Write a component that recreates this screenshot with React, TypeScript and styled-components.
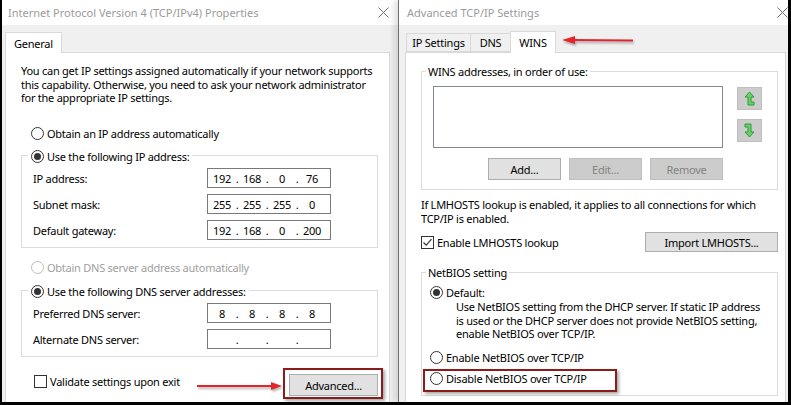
import React from 'react';
import styled, { createGlobalStyle } from 'styled-components';

const ui = {
  font: "'Noto Sans', 'Segoe UI', sans-serif",
  size: '11px',
  tracking: '-0.25px',
  panelBorder: '#d9d9d9',
  groupBorder: '#dcdcdc',
  mark: '#8b1c1c',
  arrow: '#e3242b',
};

const GlobalStyle = createGlobalStyle`
  * { box-sizing: border-box; }
  html, body { margin: 0; padding: 0; background: #000; }
  body {
    font-family: ${ui.font};
    font-size: ${ui.size};
    letter-spacing: ${ui.tracking};
    color: #000;
  }
`;

const Screen = styled.div`
  width: 791px;
  height: 405px;
  display: flex;
  background: #000;
  border-left: 2px solid #000;
  border-right: 3px solid #000;
  border-bottom: 3px solid #000;
  overflow: hidden;
`;

const Window = styled.section<{ $w: number; $divider?: boolean }>`
  width: ${(p) => p.$w}px;
  flex-shrink: 0;
  display: flex;
  flex-direction: column;
  background: #f0f0f0;
  border-left: ${(p) => (p.$divider ? '1px solid #707070' : 'none')};
  box-shadow: ${(p) => (p.$divider ? '-4px 0 6px rgba(0,0,0,0.12)' : 'none')};
  overflow: hidden;
`;

const TitleBar = styled.header<{ $pl: number; $pr: number }>`
  height: 25px;
  flex-shrink: 0;
  display: flex;
  align-items: center;
  padding: 0 ${(p) => p.$pr}px 0 ${(p) => p.$pl}px;
  background: #fff;
  color: #9b9b9b;
  letter-spacing: 0;
  white-space: nowrap;
`;

const TitleText = styled.span`
  flex: 1;
`;

const TabStrip = styled.nav<{ $pl: number }>`
  height: 27px;
  flex-shrink: 0;
  display: flex;
  align-items: flex-end;
  padding-left: ${(p) => p.$pl}px;
  position: relative;
  z-index: 1;
`;

const Tab = styled.div<{ $active?: boolean; $h: number; $w?: number }>`
  height: ${(p) => p.$h}px;
  ${(p) => (p.$w ? `width: ${p.$w}px;` : 'padding: 0 8px;')}
  display: flex;
  align-items: center;
  justify-content: center;
  background: ${(p) => (p.$active ? '#fff' : '#f0f0f0')};
  border: 1px solid ${ui.panelBorder};
  border-bottom: ${(p) => (p.$active ? 'none' : `1px solid ${ui.panelBorder}`)};
  margin-bottom: ${(p) => (p.$active ? -1 : 0)}px;
  white-space: nowrap;
  & + & {
    margin-left: -1px;
  }
`;

const Panel = styled.div<{ $ml: number; $mr: number; $pl: number; $pr: number }>`
  flex: 1;
  display: flex;
  flex-direction: column;
  margin: 0 ${(p) => p.$mr}px 0 ${(p) => p.$ml}px;
  padding: 0 ${(p) => p.$pr}px 0 ${(p) => p.$pl}px;
  background: #fff;
  border: 1px solid ${ui.panelBorder};
  border-bottom: none;
`;

const Text = styled.p<{ $mt: number; $ml?: number }>`
  margin: ${(p) => p.$mt}px 0 0 ${(p) => p.$ml ?? 0}px;
  line-height: 13.5px;
  white-space: nowrap;
`;

const Option = styled.div<{ $mt?: number; $ml?: number; $off?: boolean }>`
  height: 15px;
  display: flex;
  align-items: center;
  gap: 3px;
  margin: ${(p) => p.$mt ?? 0}px 0 0 ${(p) => p.$ml ?? 0}px;
  color: ${(p) => (p.$off ? '#a0a0a0' : '#000')};
  white-space: nowrap;
`;

const Radio = styled.span<{ $on?: boolean; $off?: boolean }>`
  width: 13px;
  height: 13px;
  flex-shrink: 0;
  border-radius: 50%;
  border: 1px solid ${(p) => (p.$off ? '#bcbcbc' : '#333')};
  background: #fff;
  display: flex;
  align-items: center;
  justify-content: center;
  &::after {
    content: '';
    display: ${(p) => (p.$on ? 'block' : 'none')};
    width: 7px;
    height: 7px;
    border-radius: 50%;
    background: #333;
  }
`;

const Box = styled.span`
  width: 13px;
  height: 13px;
  flex-shrink: 0;
  border: 1px solid #333;
  background: #fff;
  display: flex;
  align-items: center;
  justify-content: center;
`;

const Group = styled.fieldset<{ $mt: number; $pb: number }>`
  margin: ${(p) => p.$mt}px 0 0 0;
  padding: 0 0 ${(p) => p.$pb}px 0;
  min-width: 0;
  border: 1px solid ${ui.groupBorder};
`;

const GroupBody = styled.div<{ $pl: number }>`
  display: flex;
  flex-direction: column;
  padding-left: ${(p) => p.$pl}px;
`;

const Legend = styled.legend<{ $ml: number; $px: number }>`
  margin-left: ${(p) => p.$ml}px;
  padding: 0 ${(p) => p.$px}px;
  height: 15px;
  line-height: 15px;
  white-space: nowrap;
`;

const LegendOption = styled.span`
  display: inline-flex;
  align-items: center;
  gap: 3px;
  height: 15px;
`;

const FieldGrid = styled.div`
  display: grid;
  grid-template-columns: 174px 124px;
  grid-auto-rows: 20px;
  row-gap: 6px;
  align-items: center;
  padding: 5.5px 0 0 11px;
`;

const IpField = styled.div`
  width: 124px;
  height: 20px;
  border: 1px solid #7a7a7a;
  display: flex;
  align-items: center;
  padding-left: 3px;
`;

const Octet = styled.span`
  width: 22px;
  text-align: center;
`;

const Dot = styled.span`
  width: 8px;
  text-align: center;
`;

const Button = styled.button<{ $w: number; $h: number; $disabled?: boolean }>`
  width: ${(p) => p.$w}px;
  height: ${(p) => p.$h}px;
  flex-shrink: 0;
  padding: 0;
  display: flex;
  align-items: center;
  justify-content: center;
  font: inherit;
  letter-spacing: inherit;
  background: ${(p) => (p.$disabled ? '#cccccc' : '#e1e1e1')};
  border: 1px solid ${(p) => (p.$disabled ? '#bfbfbf' : '#adadad')};
  color: ${(p) => (p.$disabled ? '#838383' : '#000')};
`;

const Highlight = styled.div<{ $w?: number; $pad: string; $mt?: number; $ml?: number; $mr?: number }>`
  ${(p) => (p.$w ? `width: ${p.$w}px;` : '')}
  padding: ${(p) => p.$pad};
  margin: ${(p) => p.$mt ?? 0}px ${(p) => p.$mr ?? 0}px 0 ${(p) => p.$ml ?? 0}px;
  border: 2px solid ${ui.mark};
  box-shadow: 2px 2px 3px rgba(0, 0, 0, 0.35);
  flex-shrink: 0;
`;

const FooterRow = styled.div`
  margin-top: 11px;
  display: flex;
  align-items: flex-start;
`;

const CheckRow = styled.label<{ $mt?: number; $ml?: number }>`
  display: flex;
  align-items: center;
  gap: 3px;
  height: 15px;
  margin: ${(p) => p.$mt ?? 0}px 0 0 ${(p) => p.$ml ?? 0}px;
  white-space: nowrap;
`;

const Pointer = styled.svg<{ $mt: number; $ml?: string }>`
  flex-shrink: 0;
  align-self: flex-start;
  margin-top: ${(p) => p.$mt}px;
  margin-left: ${(p) => p.$ml ?? '0'};
  filter: drop-shadow(1px 2px 1px rgba(0, 0, 0, 0.3));
`;

const ListRow = styled.div`
  display: flex;
  margin-top: 7px;
`;

const ListColumn = styled.div`
  width: 290px;
  display: flex;
  flex-direction: column;
`;

const ListBox = styled.div`
  height: 62px;
  border: 1px solid #828790;
  background: #fff;
`;

const ButtonRow = styled.div`
  margin-top: 10px;
  display: flex;
  justify-content: flex-end;
  gap: 8px;
`;

const OrderColumn = styled.div`
  margin-left: 14px;
  padding-top: 1px;
  display: flex;
  flex-direction: column;
  gap: 9px;
`;

const OrderButton = styled.div`
  width: 25px;
  height: 23px;
  background: #cccccc;
  border: 1px solid #bfbfbf;
  display: flex;
  align-items: center;
  justify-content: center;
`;

const LmRow = styled.div`
  margin-top: 7px;
  height: 20px;
  display: flex;
  align-items: center;
  justify-content: space-between;
`;

const CloseGlyph = () => (
  <svg width="11" height="11" viewBox="0 0 11 11">
    <path d="M0.5 0.5 L10.5 10.5 M10.5 0.5 L0.5 10.5" stroke="#6f6f6f" strokeWidth="1" fill="none" />
  </svg>
);

const CheckGlyph = () => (
  <svg width="11" height="11" viewBox="0 0 11 11">
    <path d="M1.5 5.5 L4.2 8.2 L9.5 2.2" stroke="#333" strokeWidth="1.2" fill="none" />
  </svg>
);

const OrderGlyph = ({ down }: { down?: boolean }) => (
  <svg width="13" height="15" viewBox="0 0 13 15">
    <path
      d={
        down
          ? 'M2 1 L8 1 L8 9 L11 9 L6.5 14 L2 9 L5 9 L5 4 L2 4 Z'
          : 'M6.5 1 L11 6 L8 6 L8 11 L11 11 L11 14 L5 14 L5 6 L2 6 Z'
      }
      fill="#66d466"
      stroke="#2f9a3a"
      strokeWidth="1"
      strokeLinejoin="round"
    />
  </svg>
);

const IpAddress = ({ parts }: { parts: string[] }) => (
  <IpField>
    {parts.map((part, i) => (
      <React.Fragment key={i}>
        {i > 0 && <Dot>.</Dot>}
        <Octet>{part}</Octet>
      </React.Fragment>
    ))}
  </IpField>
);

const Ipv4Window = () => (
  <Window $w={396}>
    <TitleBar $pl={6} $pr={9}>
      <TitleText>Internet Protocol Version 4 (TCP/IPv4) Properties</TitleText>
      <CloseGlyph />
    </TitleBar>
    <TabStrip $pl={3}>
      <Tab $active $h={21}>General</Tab>
    </TabStrip>
    <Panel $ml={3} $mr={8} $pl={15} $pr={11}>
      <Text $mt={11}>
        You can get IP settings assigned automatically if your network supports
        <br />
        this capability. Otherwise, you need to ask your network administrator
        <br />
        for the appropriate IP settings.
      </Text>
      <Option $mt={21} $ml={10}>
        <Radio />
        Obtain an IP address automatically
      </Option>
      <Group $mt={7} $pb={7}>
        <Legend $ml={6} $px={3}>
          <LegendOption>
            <Radio $on />
            Use the following IP address:
          </LegendOption>
        </Legend>
        <FieldGrid>
          <span>IP address:</span>
          <IpAddress parts={['192', '168', '0', '76']} />
          <span>Subnet mask:</span>
          <IpAddress parts={['255', '255', '255', '0']} />
          <span>Default gateway:</span>
          <IpAddress parts={['192', '168', '0', '200']} />
        </FieldGrid>
      </Group>
      <Option $mt={11.5} $ml={10} $off>
        <Radio $off />
        Obtain DNS server address automatically
      </Option>
      <Group $mt={8} $pb={7}>
        <Legend $ml={6} $px={3}>
          <LegendOption>
            <Radio $on />
            Use the following DNS server addresses:
          </LegendOption>
        </Legend>
        <FieldGrid>
          <span>Preferred DNS server:</span>
          <IpAddress parts={['8', '8', '8', '8']} />
          <span>Alternate DNS server:</span>
          <IpAddress parts={['', '', '', '']} />
        </FieldGrid>
      </Group>
      <FooterRow>
        <CheckRow $mt={6} $ml={13}>
          <Box />
          Validate settings upon exit
        </CheckRow>
        <Pointer width="86" height="10" viewBox="0 0 86 10" $mt={13} $ml="auto">
          <path d="M0 5 L76 5" stroke={ui.arrow} strokeWidth="2" />
          <path d="M74 1 L85 5 L74 9 Z" fill={ui.arrow} />
        </Pointer>
        <Highlight $pad="4px 3px 1px 4px" $mr={-5}>
          <Button $w={89} $h={22}>Advanced...</Button>
        </Highlight>
      </FooterRow>
    </Panel>
  </Window>
);

const AdvancedWindow = () => (
  <Window $w={390} $divider>
    <TitleBar $pl={8} $pr={0}>
      <TitleText>Advanced TCP/IP Settings</TitleText>
      <CloseGlyph />
    </TitleBar>
    <TabStrip $pl={7}>
      <Tab $h={19} $w={65}>IP Settings</Tab>
      <Tab $h={19} $w={41}>DNS</Tab>
      <Tab $active $h={22} $w={46}>WINS</Tab>
      <Pointer width="72" height="10" viewBox="0 0 72 10" $mt={10} $ml="6px">
        <path d="M10 5 L71 5.5" stroke={ui.arrow} strokeWidth="2" />
        <path d="M0 5 L13 1 L13 9 Z" fill={ui.arrow} />
      </Pointer>
    </TabStrip>
    <Panel $ml={6} $mr={2} $pl={15} $pr={7}>
      <Group $mt={11} $pb={9}>
        <Legend $ml={4} $px={2}>WINS addresses, in order of use:</Legend>
        <GroupBody $pl={11}>
          <ListRow>
            <ListColumn>
              <ListBox />
              <ButtonRow>
                <Button $w={73} $h={22}>Add...</Button>
                <Button $w={73} $h={22} $disabled>Edit...</Button>
                <Button $w={73} $h={22} $disabled>Remove</Button>
              </ButtonRow>
            </ListColumn>
            <OrderColumn>
              <OrderButton>
                <OrderGlyph />
              </OrderButton>
              <OrderButton>
                <OrderGlyph down />
              </OrderButton>
            </OrderColumn>
          </ListRow>
        </GroupBody>
      </Group>
      <Text $mt={8}>
        If LMHOSTS lookup is enabled, it applies to all connections for which
        <br />
        TCP/IP is enabled.
      </Text>
      <LmRow>
        <CheckRow>
          <Box>
            <CheckGlyph />
          </Box>
          Enable LMHOSTS lookup
        </CheckRow>
        <Button $w={133} $h={20}>Import LMHOSTS...</Button>
      </LmRow>
      <Group $mt={13} $pb={3}>
        <Legend $ml={4} $px={2}>NetBIOS setting</Legend>
        <GroupBody $pl={8}>
          <Option $mt={5}>
            <Radio $on />
            Default:
          </Option>
          <Text $mt={0} $ml={26}>
            Use NetBIOS setting from the DHCP server. If static IP address
            <br />
            is used or the DHCP server does not provide NetBIOS setting,
            <br />
            enable NetBIOS over TCP/IP.
          </Text>
          <Option $mt={9}>
            <Radio />
            Enable NetBIOS over TCP/IP
          </Option>
          <Highlight $w={194} $pad="0 0 4px 5px" $mt={4.5} $ml={-7}>
            <Option>
              <Radio />
              Disable NetBIOS over TCP/IP
            </Option>
          </Highlight>
        </GroupBody>
      </Group>
    </Panel>
  </Window>
);

export default function App() {
  return (
    <>
      <GlobalStyle />
      <Screen>
        <Ipv4Window />
        <AdvancedWindow />
      </Screen>
    </>
  );
}
